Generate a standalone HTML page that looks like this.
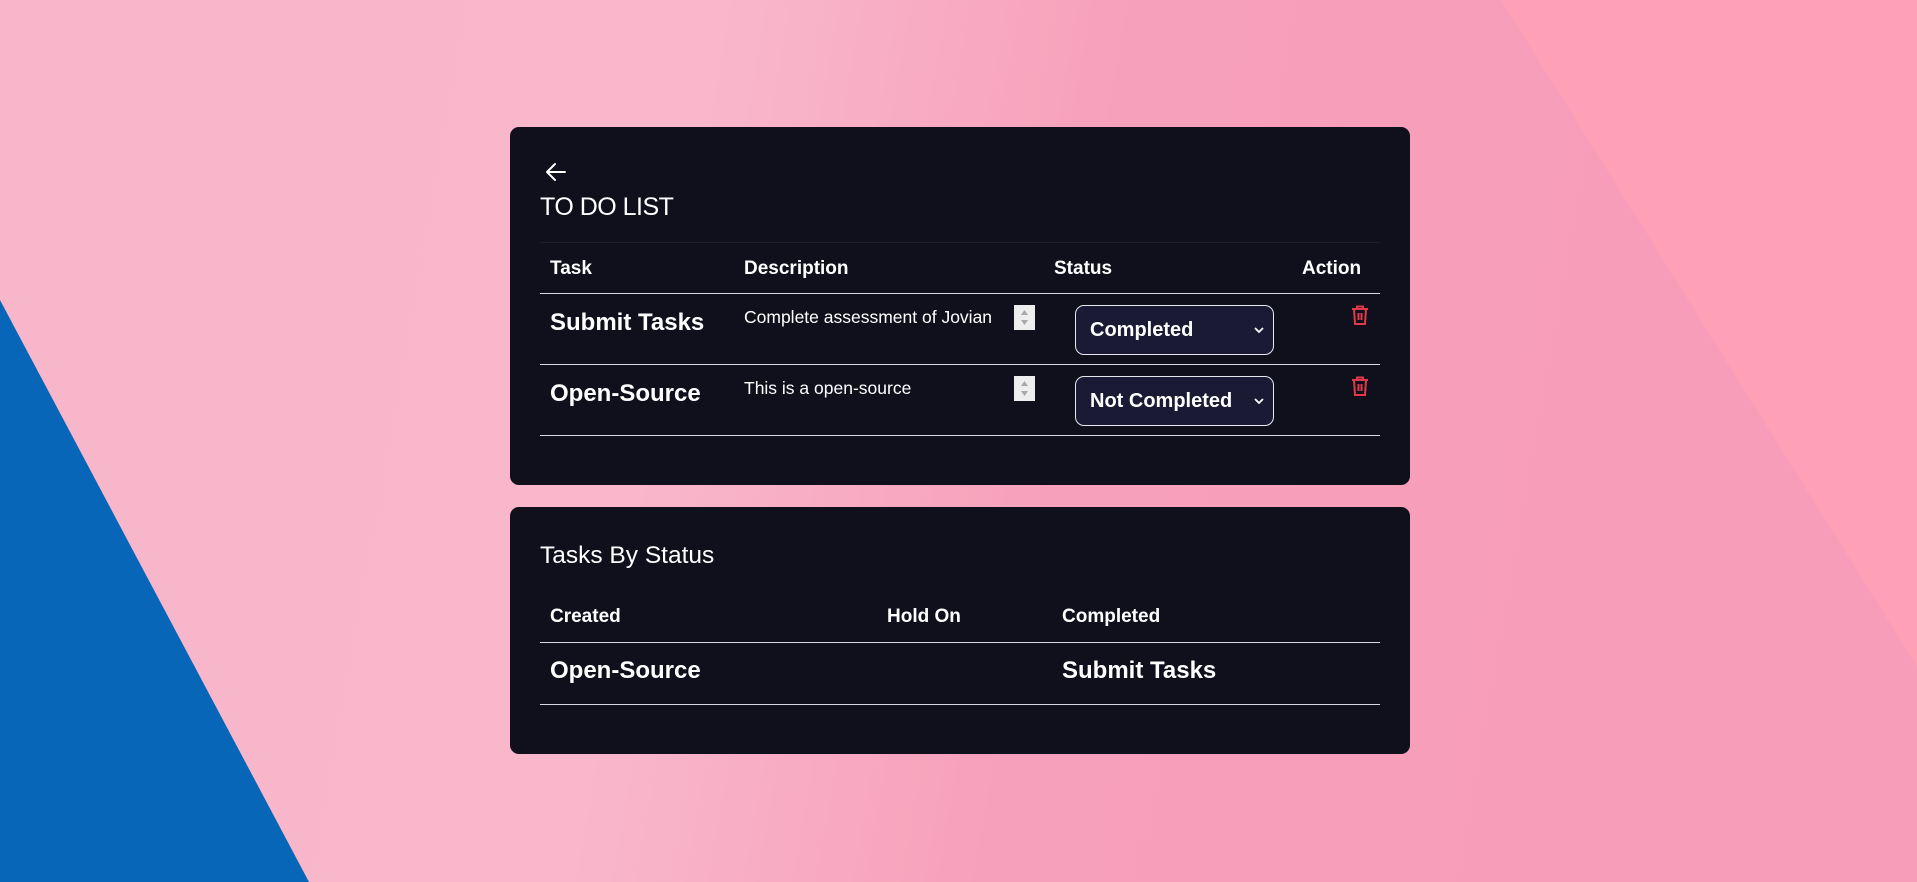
<!DOCTYPE html>
<html><head><meta charset="utf-8"><style>
*{margin:0;padding:0;box-sizing:border-box}
body{width:1917px;height:882px;overflow:hidden;position:relative;font-family:"Liberation Sans",sans-serif;color:#fff;
background:linear-gradient(100deg,#f7b6ca 0%,#f9b7cb 35%,#f7a0bb 55%,#f79dba 80%);}
.a{position:absolute;white-space:nowrap}
.card{position:absolute;left:510px;width:900px;background:#0f101c;border-radius:9px}
.hl{position:absolute;left:540px;width:840px;height:1px;background:#d8d8e0}
.b{font-weight:bold}
.sel{position:absolute;left:1075px;width:199px;height:50px;background:#1a1a35;border:1.5px solid #e8e8f0;border-radius:9px}
.sel span{position:absolute;left:14px;top:13px;font-size:20px;font-weight:bold}
.sel svg{position:absolute;right:8px;top:20px}
.spin{position:absolute;left:1014px;width:21px;height:25px;background:#eeeeee}
.spin svg{position:absolute;left:0;top:0}
</style></head><body>
<svg class="a" style="left:0;top:0" width="1917" height="882">
<polygon points="1501,0 1917,0 1917,666" fill="#ffa1b6"/>
<polygon points="0,300 309,882 0,882" fill="#0866b8"/>
</svg>
<div class="card" style="top:127px;height:358px"></div>
<div class="card" style="top:507px;height:247px"></div>

<svg class="a" style="left:544px;top:161px" width="23" height="22" viewBox="0 0 23 22"><path d="M21 11H3M11 3L3 11L11 19" stroke="#fff" stroke-width="2" fill="none" stroke-linecap="round" stroke-linejoin="round"/></svg>
<div class="a" style="left:540px;top:193px;font-size:25px;letter-spacing:-0.5px">TO DO LIST</div>
<div class="hl" style="top:242px;background:#1c1d2b"></div>

<div class="a b" style="left:550px;top:258px;font-size:19px">Task</div>
<div class="a b" style="left:744px;top:258px;font-size:19px">Description</div>
<div class="a b" style="left:1054px;top:258px;font-size:19px">Status</div>
<div class="a b" style="left:1302px;top:258px;font-size:19px">Action</div>
<div class="hl" style="top:293px"></div>

<div class="a b" style="left:550px;top:309px;font-size:24px">Submit Tasks</div>
<div class="a" style="left:744px;top:307px;font-size:17.5px">Complete assessment of Jovian</div>
<div class="spin" style="top:305px"><svg width="21" height="25"><path d="M7 10L10.5 5L14 10Z M7 15L10.5 20L14 15Z" fill="#a8a8a8"/></svg></div>
<div class="sel" style="top:305px"><span>Completed</span><svg width="12" height="8"><path d="M2 2L6 6L10 2" stroke="#fff" stroke-width="1.8" fill="none"/></svg></div>
<svg class="a" style="left:1351px;top:305px" width="18" height="20" viewBox="0 0 18 20"><path d="M1 4H17M6 4V1.5H12V4M3 4L4 19H14L15 4M7.5 8V15M10.5 8V15" stroke="#e03a4a" stroke-width="2" fill="none"/></svg>
<div class="hl" style="top:364px"></div>

<div class="a b" style="left:550px;top:380px;font-size:24px">Open-Source</div>
<div class="a" style="left:744px;top:378px;font-size:17.5px">This is a open-source</div>
<div class="spin" style="top:376px"><svg width="21" height="25"><path d="M7 10L10.5 5L14 10Z M7 15L10.5 20L14 15Z" fill="#a8a8a8"/></svg></div>
<div class="sel" style="top:376px"><span>Not Completed</span><svg width="12" height="8"><path d="M2 2L6 6L10 2" stroke="#fff" stroke-width="1.8" fill="none"/></svg></div>
<svg class="a" style="left:1351px;top:376px" width="18" height="20" viewBox="0 0 18 20"><path d="M1 4H17M6 4V1.5H12V4M3 4L4 19H14L15 4M7.5 8V15M10.5 8V15" stroke="#e03a4a" stroke-width="2" fill="none"/></svg>
<div class="hl" style="top:435px"></div>

<div class="a" style="left:540px;top:542px;font-size:24.5px">Tasks By Status</div>
<div class="a b" style="left:550px;top:606px;font-size:19px">Created</div>
<div class="a b" style="left:887px;top:606px;font-size:19px">Hold On</div>
<div class="a b" style="left:1062px;top:606px;font-size:19px">Completed</div>
<div class="hl" style="top:642px"></div>
<div class="a b" style="left:550px;top:657px;font-size:24px">Open-Source</div>
<div class="a b" style="left:1062px;top:657px;font-size:24px">Submit Tasks</div>
<div class="hl" style="top:704px"></div>
</body></html>
